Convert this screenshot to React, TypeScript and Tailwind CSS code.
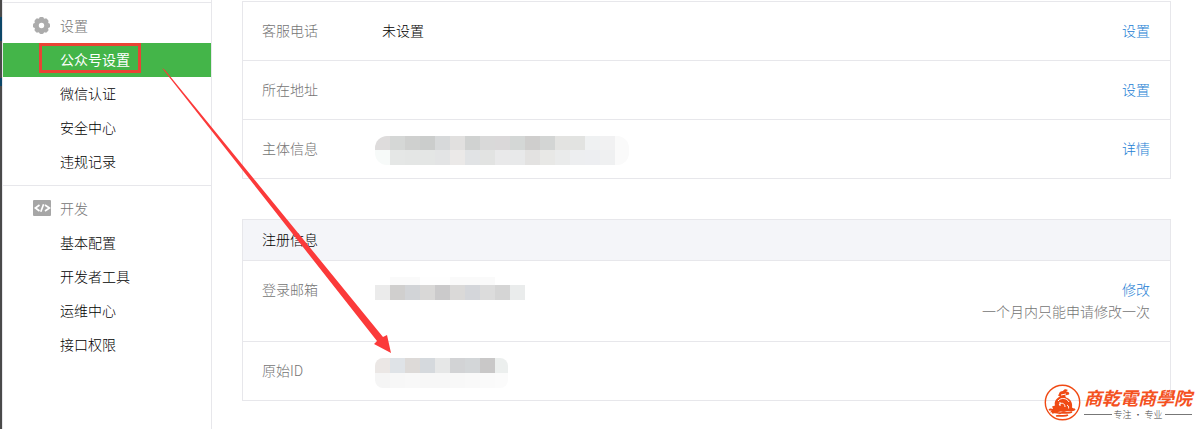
import type { ReactNode } from 'react';

type NavItem = { name: string; active?: boolean };

const settingsItems: NavItem[] = [
  { name: '公众号设置', active: true },
  { name: '微信认证' },
  { name: '安全中心' },
  { name: '违规记录' },
];

const devItems: NavItem[] = [
  { name: '基本配置' },
  { name: '开发者工具' },
  { name: '运维中心' },
  { name: '接口权限' },
];

const GearIcon = () => (
  <svg width="18" height="18" viewBox="0 0 18 18" fill="#acacac" aria-hidden="true">
    <circle cx="8.5" cy="9.5" r="7.4" />
    {[0, 45, 90, 135, 180, 225, 270, 315].map((angle) => (
      <rect key={angle} x="6.2" y="1" width="4.6" height="4" rx="1.4" transform={`rotate(${angle} 8.5 9.5)`} />
    ))}
    <circle cx="8.5" cy="9.5" r="2.7" fill="#fff" />
  </svg>
);

const CodeIcon = () => (
  <svg width="18" height="16" viewBox="0 0 18 16" fill="none" aria-hidden="true">
    <rect width="18" height="16" rx="1" fill="#a6a6a6" />
    <path d="M6.5 5 2.4 8l4.1 3M12 5l4.4 3-4.4 3M10.6 4.2 7.8 11.8" stroke="#fff" strokeWidth="1.7" />
  </svg>
);

const NavSection = ({ title, icon, items }: { title: string; icon: ReactNode; items: NavItem[] }) => (
  <section className="border-t border-[#e7e7eb] py-1.5">
    <h2 className="flex h-[34px] items-center pb-0.5 pl-[30px] font-light text-[#747474]">
      <span className="w-[27px]">{icon}</span>
      {title}
    </h2>
    <ul>
      {items.map((item) => (
        <li key={item.name}>
          <a
            href="#"
            className={
              item.active
                ? 'flex h-[34px] items-center bg-[#44b549] pb-0.5 pl-[57px] font-normal text-white'
                : 'flex h-[34px] items-center pb-0.5 pl-[57px] text-black'
            }
          >
            {item.name}
          </a>
        </li>
      ))}
    </ul>
  </section>
);

type MosaicProps = { rows: string[][]; width: number; topHeight?: number; className?: string };

// Every string is one 15px wide block of a censored line
const Mosaic = ({ rows, width, topHeight = 15, className }: MosaicProps) => (
  <svg width={width} height={topHeight + 15} className={className} shapeRendering="crispEdges" aria-hidden="true">
    {rows.map((row, y) =>
      row.map((color, x) => (
        <rect
          key={`${x}-${y}`}
          x={x * 15}
          y={y === 0 ? 0 : topHeight}
          width="15"
          height={y === 0 ? topHeight : 15}
          fill={color}
        />
      )),
    )}
  </svg>
);

const subjectMosaic = [
  ['#dedcdc', '#d5d7d6', '#cfd0cf', '#cbcdcc', '#d7d9da', '#e1e0df', '#d0d2d1', '#d9d9d9', '#dad8d9', '#d4d7d6', '#cfcecd', '#d3d5d4', '#e3e3e1', '#e2e3e1', '#eff1f2', '#f1f1f2', '#fafafa'],
  ['#f7faf9', '#e5e7e6', '#e4e6e5', '#e4e6e5', '#e3e4e5', '#ebe9e8', '#e1e3e5', '#e2e3e2', '#e9e9ea', '#e8e9ea', '#e3e2e1', '#e8e8e6', '#eaebeb', '#edeef0', '#edeef1', '#eff0f1', '#fafafa'],
];

const emailMosaic = [
  ['#ffffff', '#fafafa', '#fafafa', '#fefefe', '#fefefe', '#fafafa', '#fafafa', '#fafafa', '#ffffff', '#ffffff'],
  ['#ebebeb', '#d0cfce', '#d2d4d7', '#d9d8d7', '#cbcacb', '#dad9d8', '#d4d6da', '#dcdcdc', '#d5d5d5', '#eaecec'],
];

const idMosaic = [
  ['#ebe7e5', '#dfe3e7', '#dddad8', '#d5d9dd', '#e6e7e7', '#d2d3d5', '#d3d6d8', '#c9c8c8', '#ecefee'],
  ['#f5f5f5', '#f7f7f7', '#f8f8f8', '#f7f7f7', '#f7f7f7', '#f8f8f8', '#f9f9f9', '#fafafa', '#fbfbfb'],
];

type RowProps = { label: string; value?: ReactNode; action?: string; tip?: string };

const InfoRow = ({ label, value, action, tip }: RowProps) => (
  <tr>
    <th
      scope="row"
      className="w-[132px] border-b border-[#e7e7eb] pt-[17px] pb-[19px] pl-[19px] text-left align-top font-light text-[#747474]"
    >
      {label}
    </th>
    <td className="border-b border-[#e7e7eb] pt-4 pb-3 align-top">{value}</td>
    <td className="border-b border-[#e7e7eb] pt-[17px] pr-5 pb-[19px] text-right align-top">
      {action && (
        <a href="#" className="text-[#2480d4]">
          {action}
        </a>
      )}
      {tip && <p className="text-[#747474]">{tip}</p>}
    </td>
  </tr>
);

const Brand = () => (
  <div className="absolute right-2 bottom-2 flex items-center gap-[3px] text-[#f4511e]">
    <svg width="37" height="37" viewBox="0 0 37 37" fill="none" aria-hidden="true">
      <circle cx="18.5" cy="18.5" r="17.2" stroke="#f04a14" strokeWidth="1.4" />
      <path
        d="M15 10c0-2 2-3 4-3 1-2 3-2 5-1l-2 1.500c2 0 4 1 3 3l-4 1 1 2c4 1 7 5 6 10l3 2-3 2c-5-1-8 1-11 0-4 1-8 0-11 1l3-4-1-2 3-1c-1-4 1-7 5-9l-2-1 1-1.500Z"
        fill="#f04a14"
      />
      <path
        d="M14 17c3-4 9-3 11 1M15 21c2-3 6-2 6 2M16 18v4M23 21c2 1 2 3 1 5M17 11l5-1"
        stroke="#fff"
        strokeWidth="1"
      />
      <path d="M5 26c3-2 5 2 8 0s6 2 9 0 6 2 9-1M8 29c3-2 6 1 9 0s6 1 11-1M12 32c4-1 8 1 12-1" stroke="#f04a14" strokeWidth="1.8" />
    </svg>
    <div>
      <p className="text-lg leading-6 font-bold italic">商乾電商學院</p>
      <p className="flex items-center gap-0.5 text-[9px] leading-3 text-[#444]">
        <span className="h-px flex-1 bg-[#777]" />
        专注 · 专业
        <span className="h-px flex-1 bg-[#777]" />
      </p>
    </div>
  </div>
);

const App = () => {
  return (
    <div className="relative flex min-h-screen overflow-hidden bg-white font-['Noto_Sans_CJK_SC',sans-serif] text-sm leading-[22px] font-light text-black">
      <div className="w-0.5 bg-[#4a4a4a]">
        <div className="mt-[17px] h-6 bg-[#0b4668]" />
        <div className="mt-[37px] h-2 bg-[#0b4668]" />
      </div>

      <nav className="w-[210px] shrink-0 border-x border-[#e7e7eb] pt-0.5">
        <NavSection title="设置" icon={<GearIcon />} items={settingsItems} />
        <NavSection title="开发" icon={<CodeIcon />} items={devItems} />
      </nav>

      <main className="min-w-0 flex-1 pt-px pr-[29px] pl-[30px]">
        <table className="w-full border-separate border-spacing-0 border-x border-t border-[#e7e7eb]">
          <tbody>
            <InfoRow label="客服电话" value={<p className="pt-px pl-[7px]">未设置</p>} action="设置" />
            <InfoRow label="所在地址" action="设置" />
            <InfoRow
              label="主体信息"
              value={<Mosaic rows={subjectMosaic} width={254} topHeight={14} className="rounded-xl" />}
              action="详情"
            />
          </tbody>
        </table>

        <table className="mt-10 w-full border-separate border-spacing-0 border-x border-t border-[#e7e7eb]">
          <thead>
            <tr>
              <th
                colSpan={3}
                className="border-b border-[#e7e7eb] bg-[#f4f5f9] pt-2 pb-2.5 pl-[19px] text-left font-light"
              >
                注册信息
              </th>
            </tr>
          </thead>
          <tbody>
            <InfoRow
              label="登录邮箱"
              value={<Mosaic rows={emailMosaic} width={150} topHeight={8} />}
              action="修改"
              tip="一个月内只能申请修改一次"
            />
            <InfoRow label="原始ID" value={<Mosaic rows={idMosaic} width={133} className="rounded-lg" />} />
          </tbody>
        </table>
      </main>

      {/* highlight box and arrow */}
      <svg className="pointer-events-none absolute top-0 left-0" width="400" height="360" aria-hidden="true">
        <rect x="40.5" y="44.5" width="99" height="27" fill="none" stroke="#ea4335" strokeWidth="3" />
        <path d="M162 68 165 70 383 337 387 335 391 353 374 344 377 341Z" fill="#fb3a3a" />
      </svg>

      <Brand />
    </div>
  );
};

export default App;
